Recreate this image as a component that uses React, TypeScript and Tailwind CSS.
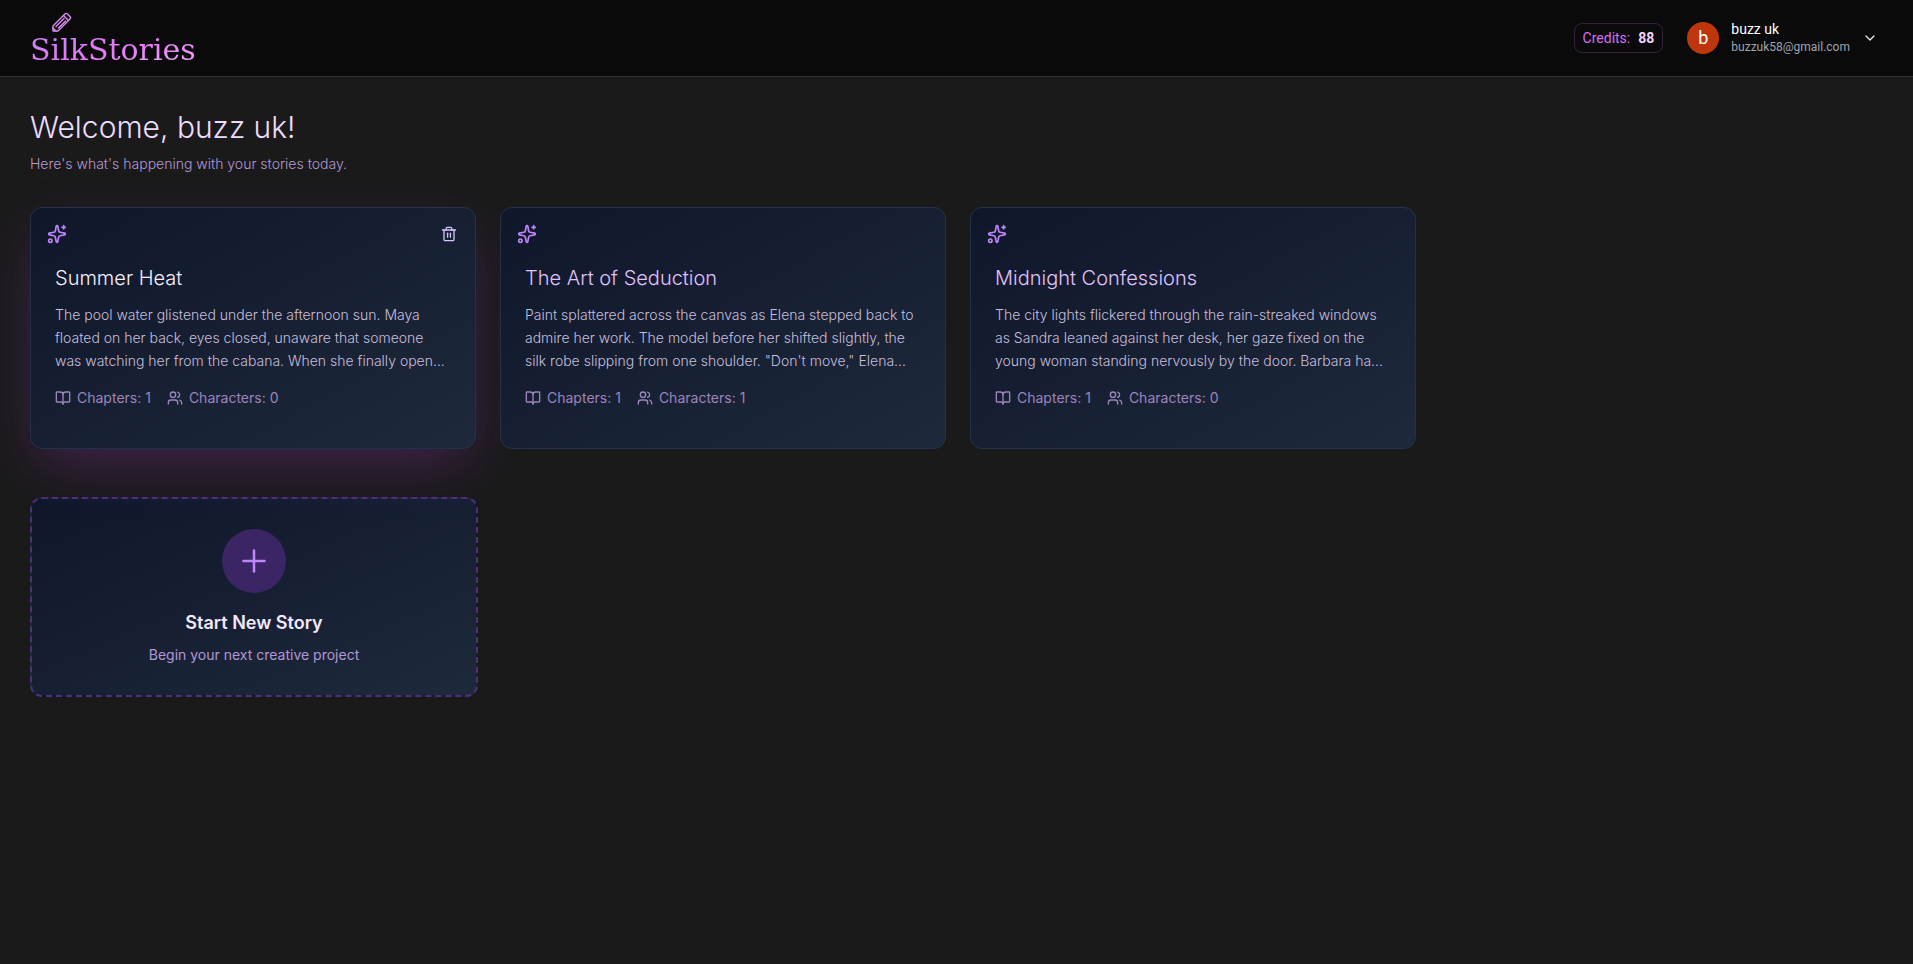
import { BookOpen, ChevronDown, Plus, Sparkles, Users } from 'lucide-react';

interface Story {
  id: number;
  title: string;
  excerpt: string;
  chapters: number;
  characters: number;
  active?: boolean;
}

const stories: Story[] = [
  {
    id: 1,
    title: 'Summer Heat',
    excerpt:
      'The pool water glistened under the afternoon sun. Maya floated on her back, eyes closed, unaware that someone was watching her from the cabana. When she finally open...',
    chapters: 1,
    characters: 0,
    active: true,
  },
  {
    id: 2,
    title: 'The Art of Seduction',
    excerpt:
      'Paint splattered across the canvas as Elena stepped back to admire her work. The model before her shifted slightly, the silk robe slipping from one shoulder. "Don\'t move," Elena...',
    chapters: 1,
    characters: 1,
  },
  {
    id: 3,
    title: 'Midnight Confessions',
    excerpt:
      'The city lights flickered through the rain-streaked windows as Sandra leaned against her desk, her gaze fixed on the young woman standing nervously by the door. Barbara ha...',
    chapters: 1,
    characters: 0,
  },
];

function PencilIcon({ className }: { className?: string }) {
  return (
    <svg
      viewBox="0 0 20 20"
      fill="none"
      stroke="currentColor"
      strokeWidth="1.4"
      strokeLinejoin="round"
      strokeLinecap="round"
      className={className}
      aria-hidden="true"
    >
      <path d="M1 19v-5L13.2 1.800a1.400 1.400 0 0 1 2 0l3 3a1.400 1.400 0 0 1 0 2L6 19z" />
      <path d="M1 16l3 3" />
      <path d="M11.500 3.500l5 5" />
      <path d="M4 14.500l8-8" />
      <path d="M6.500 16l7-7" />
    </svg>
  );
}

function TrashIcon({ className }: { className?: string }) {
  return (
    <svg
      viewBox="0 0 16 16"
      fill="none"
      stroke="currentColor"
      strokeWidth="1.3"
      strokeLinejoin="round"
      strokeLinecap="round"
      className={className}
      aria-hidden="true"
    >
      <path d="M1.500 4h13" />
      <path d="M3 4v9.500a1.200 1.200 0 0 0 1.200 1.200h7.600a1.200 1.200 0 0 0 1.200-1.200V4" />
      <path d="M5.200 4V2.300A1 1 0 0 1 6.200 1.300h3.600a1 1 0 0 1 1 1V4" />
      <path d="M6.600 7.200v4" />
      <path d="M9.400 7.200v4" />
    </svg>
  );
}

function Logo() {
  return (
    <a href="#" className="relative block pt-6">
      <PencilIcon className="absolute left-[22px] top-1 h-5 w-5 text-[#d88cf0]" />
      <span className="block bg-linear-to-br from-[#c084fc] via-[#e879f9] to-[#f0abfc] bg-clip-text font-['DejaVu_Serif',serif] text-3xl leading-9 text-transparent">
        SilkStories
      </span>
    </a>
  );
}

function Header() {
  return (
    <header className="flex h-[77px] items-center justify-between border-b border-[#333333] bg-[#0a0a0a] px-[30px]">
      <Logo />
      <div className="flex items-center gap-6 font-[Roboto,sans-serif]">
        <div className="flex h-[30px] items-center gap-2 rounded-lg border border-[#35203d] px-2 text-sm">
          <span className="text-[#d66ff0]">Credits:</span>
          <span className="font-bold text-[#f3d4ff]">88</span>
        </div>
        <button type="button" className="flex items-center gap-3 pr-[5px] text-left">
          <span className="flex h-8 w-8 items-center justify-center rounded-full bg-[#bf360c] text-lg text-white">
            b
          </span>
          <span className="block">
            <span className="block text-sm leading-[18px] text-white">buzz uk</span>
            <span className="block text-xs leading-[18px] text-[#9ca3af]">buzzuk58@gmail.com</span>
          </span>
          <ChevronDown className="h-4 w-4 text-[#e5e7eb]" />
        </button>
      </div>
    </header>
  );
}

function StoryCard({ story }: { story: Story }) {
  return (
    <article
      className={`rounded-xl border border-[#233248] bg-linear-to-br from-[#0f172a] to-[#1e293b] p-4 ${
        story.active ? 'shadow-[0_20px_60px_-10px_rgba(168,60,220,0.3)]' : ''
      }`}
    >
      <div className="flex h-5 items-center justify-between">
        <Sparkles className="h-5 w-5 text-[#c084fc]" />
        {story.active && (
          <button type="button" aria-label={`Delete ${story.title}`} className="px-0.5 text-[#d8c4fe]">
            <TrashIcon className="h-4 w-4" />
          </button>
        )}
      </div>
      <div className="px-2 pt-5 pb-6">
        <h2 className={`text-xl leading-7 font-light ${story.active ? 'text-[#f8f0ff]' : 'text-[#e0c2ff]'}`}>
          {story.title}
        </h2>
        <p className="mt-[11px] text-sm leading-[23px] font-light text-[#c8bedd]">{story.excerpt}</p>
        <div className="mt-4 flex items-center gap-4 text-sm text-[#9c84bd]">
          <span className="flex items-center gap-1.5">
            <BookOpen className="h-4 w-4" />
            Chapters: {story.chapters}
          </span>
          <span className="flex items-center gap-1.5">
            <Users className="h-4 w-4" />
            Characters: {story.characters}
          </span>
        </div>
      </div>
    </article>
  );
}

function NewStoryButton() {
  return (
    <button
      type="button"
      className="mt-12 flex w-full max-w-[448px] flex-col items-center rounded-xl border-2 border-dashed border-[#4c3079] bg-linear-to-br from-[#0f172a] to-[#1e293b] py-[30px]"
    >
      <span className="flex h-16 w-16 items-center justify-center rounded-full bg-[#3b2564]">
        <Plus className="h-9 w-9 text-[#c084fc]" strokeWidth={1.7} />
      </span>
      <span className="mt-4 text-lg leading-7 font-semibold text-[#f3e8ff]">Start New Story</span>
      <span className="mt-2 text-sm text-[#b296d6]">Begin your next creative project</span>
    </button>
  );
}

export default function App() {
  return (
    <div className="min-h-screen bg-[#1a1a1a] font-[Inter,sans-serif]">
      <Header />
      <main className="px-[30px] py-8">
        <h1 className="text-3xl leading-9 font-light text-[#eddcff]">Welcome, buzz uk!</h1>
        <p className="mt-2 text-sm leading-[22px] font-light text-[#b898d6]">
          Here's what's happening with your stories today.
        </p>
        <section className="mt-8 grid max-w-[1386px] grid-cols-1 gap-6 md:grid-cols-2 lg:grid-cols-3">
          {stories.map((story) => (
            <StoryCard key={story.id} story={story} />
          ))}
        </section>
        <NewStoryButton />
      </main>
    </div>
  );
}
